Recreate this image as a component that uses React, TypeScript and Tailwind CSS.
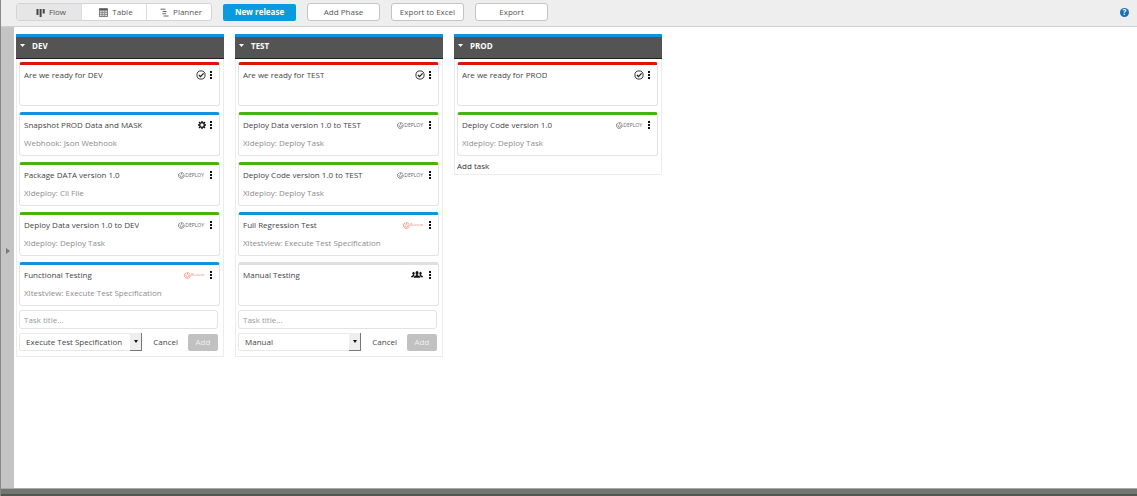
import { useState } from "react"
import clsx from "clsx"

type Kind = "gate" | "webhook" | "deploy" | "review" | "manual"

interface Task {
    title: string
    subtitle?: string
    kind: Kind
    bar: "red" | "blue" | "green" | "gray"
}

interface Phase {
    name: string
    tasks: Task[]
    newTask?: string
}

const phases: Phase[] = [
    {
        name: "DEV",
        newTask: "Execute Test Specification",
        tasks: [
            { title: "Are we ready for DEV", kind: "gate", bar: "red" },
            { title: "Snapshot PROD Data and MASK", subtitle: "Webhook: Json Webhook", kind: "webhook", bar: "blue" },
            { title: "Package DATA version 1.0", subtitle: "Xldeploy: Cli File", kind: "deploy", bar: "green" },
            { title: "Deploy Data version 1.0 to DEV", subtitle: "Xldeploy: Deploy Task", kind: "deploy", bar: "green" },
            { title: "Functional Testing", subtitle: "Xltestview: Execute Test Specification", kind: "review", bar: "blue" },
        ],
    },
    {
        name: "TEST",
        newTask: "Manual",
        tasks: [
            { title: "Are we ready for TEST", kind: "gate", bar: "red" },
            { title: "Deploy Data version 1.0 to TEST", subtitle: "Xldeploy: Deploy Task", kind: "deploy", bar: "green" },
            { title: "Deploy Code version 1.0 to TEST", subtitle: "Xldeploy: Deploy Task", kind: "deploy", bar: "green" },
            { title: "Full Regression Test", subtitle: "Xltestview: Execute Test Specification", kind: "review", bar: "blue" },
            { title: "Manual Testing", kind: "manual", bar: "gray" },
        ],
    },
    {
        name: "PROD",
        tasks: [
            { title: "Are we ready for PROD", kind: "gate", bar: "red" },
            { title: "Deploy Code version 1.0", subtitle: "Xldeploy: Deploy Task", kind: "deploy", bar: "green" },
        ],
    },
]

const bars = {
    red: "border-t-[#dc1405]",
    blue: "border-t-[#0e93dc]",
    green: "border-t-[#4bb012]",
    gray: "border-t-[#dfdfdf]",
}

const FlowIcon = () => (
    <svg viewBox="0 0 9 9" className="size-[9px]" fill="#444" aria-hidden="true">
        <rect x="0.5" y="1" width="2" height="6" />
        <rect x="3.6" y="1" width="2" height="8" />
        <rect x="6.7" y="1" width="2" height="4.5" />
    </svg>
)

const TableIcon = () => (
    <svg viewBox="0 0 9 9" className="size-[9px]" aria-hidden="true">
        <rect x="0.5" y="0.8" width="8" height="7.7" fill="#ddd" stroke="#666" strokeWidth="0.8" />
        <rect x="0.5" y="0.5" width="8" height="2" fill="#555" />
        <path d="M0.5 4.5h8M0.5 6.5h8M3.2 2v6.5M5.8 2v6.5" stroke="#777" strokeWidth="0.7" />
    </svg>
)

const PlannerIcon = () => (
    <svg viewBox="0 0 9 9" className="size-[9px]" stroke="#666" strokeWidth="1" aria-hidden="true">
        <path d="M0.5 1.2h5M2.5 3.5h4M2.5 5.7h3.5M3.5 8h5" />
    </svg>
)

const SwirlIcon = () => (
    <svg viewBox="0 0 8 8" className="size-[7px]" fill="none" stroke="currentColor" strokeWidth="0.8" aria-hidden="true">
        <path d="M3 0.8A3.3 3.3 0 1 0 6.8 2.6M4 0.5v2.6M2.6 3.2a1.7 1.7 0 1 0 2.9 0M4.2 0.5l2.4 1.3" />
    </svg>
)

const KindIcon = ({ kind }: { kind: Kind }) => {
    if (kind === "gate") {
        return (
            <svg viewBox="0 0 10 10" className="size-[10px]" fill="none" stroke="#222" aria-hidden="true">
                <circle cx="5" cy="5" r="4.1" strokeWidth="0.9" />
                <path d="M2.9 5l1.6 1.6L7.6 3.4" strokeWidth="1.3" />
            </svg>
        )
    }
    if (kind === "webhook") {
        return (
            <svg viewBox="0 0 8 8" className="size-2" fill="none" stroke="#111" aria-hidden="true">
                <circle cx="4" cy="4" r="2.3" strokeWidth="1.3" />
                <path d="M4 0v1.5M4 6.5V8M0 4h1.5M6.5 4H8M1 1l1.2 1.2M5.8 5.8L7 7M7 1L5.8 2.2M2.2 5.8L1 7" strokeWidth="1.4" />
            </svg>
        )
    }
    if (kind === "manual") {
        return (
            <svg viewBox="0 0 12 8" className="mr-0.5 h-2 w-3" fill="#111" aria-hidden="true">
                <ellipse cx="6" cy="1.9" rx="1.5" ry="1.9" />
                <path d="M2.8 6.8c0-1.7 1-2.1 2.4-2.6V3.2h1.6v1c1.4.5 2.4.9 2.4 2.6z" />
                <ellipse cx="2.5" cy="2.2" rx="1.1" ry="1.5" />
                <ellipse cx="9.5" cy="2.2" rx="1.1" ry="1.5" />
                <path d="M0 6.3c0-1.3.7-1.7 2-2.1V3.3h1.2v.9l.6.3c-.8.4-1.4.9-1.5 1.8zM12 6.3c0-1.3-.7-1.7-2-2.1V3.3H8.8v.9l-.6.3c.8.4 1.4.9 1.5 1.8z" />
            </svg>
        )
    }
    if (kind === "review") {
        return (
            <span className="flex items-center pr-0.5 text-[4px] text-[#ee7f70]">
                <SwirlIcon />
                Review
            </span>
        )
    }
    return (
        <span className="flex items-center pr-0.5 text-[5px] text-[#666]">
            <SwirlIcon />
            DEPLOY
        </span>
    )
}

const TaskCard = ({ task }: { task: Task }) => (
    <li className={clsx("h-11 rounded-[3px] border border-t-3 border-[#e2e4e4] px-1 pt-1", bars[task.bar])}>
        <div className="flex h-3 items-center">
            <h3 className="mr-auto truncate text-[#444]">{task.title}</h3>
            <KindIcon kind={task.kind} />
            <button aria-label="Task menu" className="ml-px flex w-2 justify-center">
                <svg viewBox="0 0 2 8" className="h-2 w-[2px]" fill="#111" aria-hidden="true">
                    <path d="M0 0h2v2H0zM0 3h2v2H0zM0 6h2v2H0z" />
                </svg>
            </button>
        </div>
        {task.subtitle && <p className="mt-1.5 truncate text-[#8c8c8c]">{task.subtitle}</p>}
    </li>
)

const NewTaskForm = ({ phase, initial }: { phase: string; initial: string }) => {
    const [type, setType] = useState(initial)

    return (
        <form className="mt-1 pr-0.5 pb-[3px]" onSubmit={(e) => e.preventDefault()}>
            <input
                type="text"
                aria-label={`Task title for ${phase}`}
                placeholder="Task title..."
                className="block h-[19px] w-full rounded-[3px] border border-[#e2e4e4] px-1 placeholder:text-[#999] outline-none"
            />
            <div className="mt-1 flex items-center">
                <div className="relative w-[123px]">
                    <select
                        aria-label={`Task type for ${phase}`}
                        value={type}
                        onChange={(e) => setType(e.target.value)}
                        className="block h-[18px] w-full appearance-none rounded-[2px] border border-[#e6e8e8] bg-white pl-1.5 text-[#444] outline-none"
                    >
                        <option>Execute Test Specification</option>
                        <option>Manual</option>
                    </select>
                    <span className="pointer-events-none absolute inset-y-0 right-0 flex w-3 items-center justify-center border-r border-b border-[#777] bg-[#eee]">
                        <svg viewBox="0 0 4 3" className="h-[3px] w-1" fill="#111" aria-hidden="true">
                            <path d="M0 0h4L2 3z" />
                        </svg>
                    </span>
                </div>
                <button type="button" className="ml-auto text-[#444]">Cancel</button>
                <button className="ml-2.5 h-[17px] w-[30px] rounded-[2px] bg-[#c1c1c1] text-[#eee]">Add</button>
            </div>
        </form>
    )
}

const PhaseColumn = ({ phase }: { phase: Phase }) => (
    <section className="w-52 shrink-0">
        <header className="flex h-[25px] items-center gap-[7px] border-t-3 border-b border-t-[#0e93dc] border-b-[#222] bg-[#545454] px-1 pb-[3px]">
            <button aria-label={`Collapse ${phase.name}`} className="pb-0.5">
                <svg viewBox="0 0 5 3" className="h-[3px] w-[5px]" fill="#fff" aria-hidden="true">
                    <path d="M0 0h5L2.5 3z" />
                </svg>
            </button>
            <h2 className="font-bold text-white">{phase.name}</h2>
        </header>
        <div className="border border-t-0 border-[#ececec] pt-[3px] pr-[3px] pb-0.5 pl-0.5">
            <ul className="flex flex-col gap-1.5">
                {phase.tasks.map((task) => (
                    <TaskCard key={task.title} task={task} />
                ))}
            </ul>
            {phase.newTask ? (
                <NewTaskForm phase={phase.name} initial={phase.newTask} />
            ) : (
                <button className="mt-1 block text-[#333]">Add task</button>
            )}
        </div>
    </section>
)

const views = [
    { name: "Flow", Icon: FlowIcon },
    { name: "Table", Icon: TableIcon },
    { name: "Planner", Icon: PlannerIcon },
]

const App = () => {
    const [view, setView] = useState("Flow")

    return (
        <div className="flex min-h-screen flex-col border-l border-[#888] bg-white font-['Open_Sans',sans-serif] text-[8px] leading-3 text-[#555]">
            <header className="flex h-[27px] items-center gap-[11px] border-b border-[#cfcfcf] bg-[#eee] pr-2 pb-0.5 pl-[15px]">
                <nav className="flex h-[18px] w-[196px] overflow-hidden rounded-[3px] border border-[#d4d4d4] bg-white">
                    {views.map(({ name, Icon }) => (
                        <button
                            key={name}
                            onClick={() => setView(name)}
                            className={clsx(
                                "flex flex-1 items-center justify-center gap-1 border-r border-[#ddd] pl-1 last:border-r-0",
                                view === name && "bg-[#e6e6e6]"
                            )}
                        >
                            <Icon />
                            {name}
                        </button>
                    ))}
                </nav>
                <button className="h-[17px] w-[73px] rounded-[2px] bg-[#0a9ae0] font-bold text-white">New release</button>
                {["Add Phase", "Export to Excel", "Export"].map((label) => (
                    <button key={label} className="h-[18px] w-[73px] rounded-[3px] border border-[#c4c4c4] bg-white">
                        {label}
                    </button>
                ))}
                <button aria-label="Help" className="ml-auto flex size-[9px] items-center justify-center rounded-full bg-[#1a6fb8] font-bold text-white">
                    ?
                </button>
            </header>
            <div className="flex flex-1">
                <button aria-label="Open side panel" className="flex w-[13px] items-center justify-center bg-[#c4c4c4] pb-3.5">
                    <svg viewBox="0 0 4 6" className="h-1.5 w-1" fill="#777" aria-hidden="true">
                        <path d="M0 0l4 3-4 3z" />
                    </svg>
                </button>
                <main className="flex flex-1 items-start gap-[11px] overflow-x-auto pt-[7px] pl-0.5">
                    {phases.map((phase) => (
                        <PhaseColumn key={phase.name} phase={phase} />
                    ))}
                </main>
            </div>
            <footer className="h-2 border-t border-b-2 border-t-[#aaa] border-b-[#555] bg-[#737573]" />
        </div>
    )
}

export default App
